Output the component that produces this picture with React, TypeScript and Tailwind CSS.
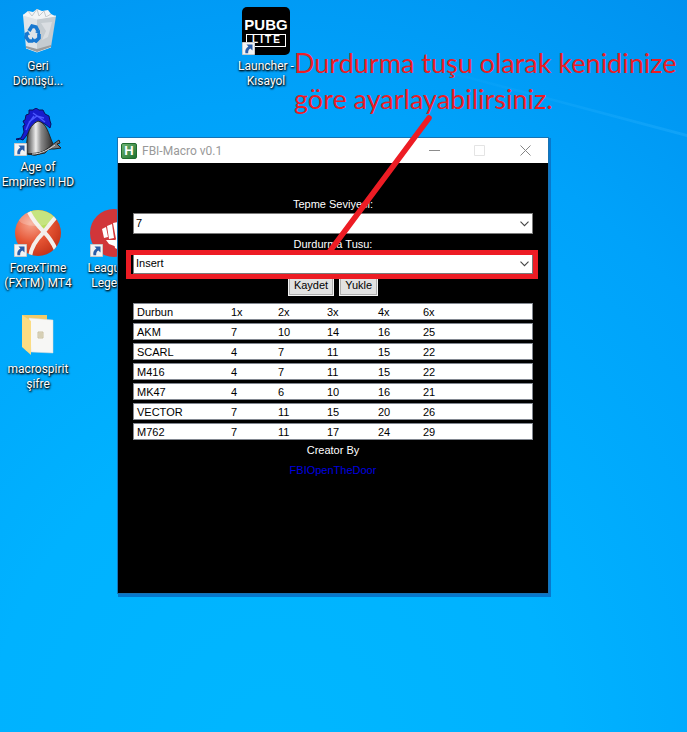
import type { ReactNode } from "react";

const scopes = ["Durbun", "1x", "2x", "3x", "4x", "6x"];

const weapons = [
  { name: "AKM", values: [7, 10, 14, 16, 25] },
  { name: "SCARL", values: [4, 7, 11, 15, 22] },
  { name: "M416", values: [4, 7, 11, 15, 22] },
  { name: "MK47", values: [4, 6, 10, 16, 21] },
  { name: "VECTOR", values: [7, 11, 15, 20, 26] },
  { name: "M762", values: [7, 11, 17, 24, 29] },
];

const rowClass =
  "grid h-[17px] grid-cols-[94px_47px_49px_51px_45px_1fr] border border-[#828790] bg-white pl-[3px] text-left leading-4 text-black";

export default function App() {
  return (
    <main className="relative min-h-screen overflow-hidden bg-[radial-gradient(ellipse_120%_130%_at_40%_105%,#00b7ff_0%,#00b2ff_35%,#00a2fa_70%,#008eed_100%)] font-['Roboto',sans-serif]">
      <LightRay />
      <div className="grid auto-rows-[101px] grid-cols-[repeat(auto-fill,76px)] pt-[7px]">
        <DesktopIcon place="col-start-1 row-start-1" lines={["Geri", "Dönüşü..."]}>
          <RecycleBin />
        </DesktopIcon>
        <DesktopIcon place="col-start-4 row-start-1" lines={["Launcher -", "Kısayol"]} shortcut>
          <PubgLogo />
        </DesktopIcon>
        <DesktopIcon place="col-start-1 row-start-2" lines={["Age of", "Empires II HD"]} shortcut>
          <Helmet />
        </DesktopIcon>
        <DesktopIcon place="col-start-1 row-start-3" lines={["ForexTime", "(FXTM) MT4"]} shortcut>
          <ForexLogo />
        </DesktopIcon>
        <DesktopIcon place="col-start-2 row-start-3" lines={["League of", "Legends"]} shortcut>
          <FistLogo />
        </DesktopIcon>
        <DesktopIcon place="col-start-1 row-start-4" lines={["macrospirit", "şifre"]}>
          <Folder />
        </DesktopIcon>
      </div>
      <MacroWindow />
      <p className="absolute top-[45px] left-[294px] font-['Lato',sans-serif] text-[27px] leading-9 whitespace-nowrap text-[#ed1c24]">
        Durdurma tuşu olarak kenidinize
        <br />
        göre ayarlayabilirsiniz.
      </p>
      <svg className="absolute top-[112px] left-[322px] h-[144px] w-[114px]" viewBox="0 0 114 144">
        <path d="M107 6 8 139" stroke="#ed1c24" strokeWidth="5.5" strokeLinecap="round" />
      </svg>
    </main>
  );
}

function MacroWindow() {
  return (
    <section className="absolute top-[138px] left-[118px] w-[430px] bg-black font-['Liberation_Sans',sans-serif] text-[11px] text-white shadow-[0_0_0_1px_#1673b4,3px_0_0_#0878cc,0_4px_0_#0878cc,3px_4px_0_#0878cc]">
      <header className="flex h-[25px] items-center bg-white pl-[3px] font-['Roboto',sans-serif] text-xs text-[#999]">
        <span className="mr-[5px] flex size-4 items-center justify-center rounded-[2px] border border-[#1f6b2c] bg-linear-to-br from-[#6fb573] to-[#1d7130] font-['Liberation_Sans',sans-serif] text-[13px] leading-none font-bold text-white">
          H
        </span>
        <h1 className="flex-1">FBI-Macro v0.1</h1>
        <button aria-label="Minimize" className="flex h-full w-[45px] items-center justify-center">
          <svg className="size-[11px]" viewBox="0 0 11 11"><path d="M0 5.5h11" stroke="#8c8c8c" /></svg>
        </button>
        <button aria-label="Maximize" disabled className="flex h-full w-[45px] items-center justify-center">
          <svg className="size-[11px]" viewBox="0 0 11 11"><path d="M.5.5h10v10H.5z" fill="none" stroke="#e4e4e4" /></svg>
        </button>
        <button aria-label="Close" className="flex h-full w-[46px] items-center justify-center">
          <svg className="size-[11px]" viewBox="0 0 11 11"><path d="m.5.5 10 10m0-10-10 10" stroke="#858585" /></svg>
        </button>
      </header>
      <div className="flex min-h-[430px] flex-col px-[15px] pt-8">
        <div className="flex flex-col gap-px">
          <Field id="recoil" label="Tepme Seviyesi:" value="7" />
          <Field id="stop-key" label="Durdurma Tusu:" value="Insert" marked />
        </div>
        <div className="flex justify-center gap-[5px]">
          <PushButton>Kaydet</PushButton>
          <PushButton>Yukle</PushButton>
        </div>
        <table className="mt-[7px] block">
          <thead className="block">
            <tr className={rowClass}>
              {scopes.map((scope) => (
                <th key={scope} scope="col" className="font-normal">{scope}</th>
              ))}
            </tr>
          </thead>
          <tbody className="mt-[3px] flex flex-col gap-[3px]">
            {weapons.map((weapon) => (
              <tr key={weapon.name} className={rowClass}>
                <th scope="row" className="font-normal">{weapon.name}</th>
                {weapon.values.map((value, i) => (
                  <td key={i}>{value}</td>
                ))}
              </tr>
            ))}
          </tbody>
        </table>
        <p className="text-center leading-5">Creator By</p>
        <a href="#creator" className="self-center leading-5 text-[#0000e0]">FBIOpenTheDoor</a>
      </div>
    </section>
  );
}

function Field({ id, label, value, marked }: { id: string; label: string; value: string; marked?: boolean }) {
  return (
    <div>
      <label htmlFor={id} className="block text-center leading-[18px]">{label}</label>
      <div className="relative">
        <select id={id} defaultValue={value} className="block h-[21px] w-full appearance-none border border-[#7a7a7a] bg-white pl-[2px] text-black">
          <option>{value}</option>
        </select>
        <svg className="pointer-events-none absolute top-2 right-1 h-[6px] w-[9px]" viewBox="0 0 9 6">
          <path d="m.5.7 4 4 4-4" fill="none" stroke="#444" strokeWidth="1.1" />
        </svg>
        {marked && <div className="pointer-events-none absolute -top-[3px] -right-[5px] -bottom-[5px] -left-[7px] z-10 border-5 border-[#ed1c24]" />}
      </div>
    </div>
  );
}

function PushButton({ children }: { children: ReactNode }) {
  return (
    <button className="h-[22px] border border-[#f4f4f4] bg-[#e1e1e1] px-[5px] leading-5 text-black inset-ring inset-ring-[#adadad]">
      {children}
    </button>
  );
}

function DesktopIcon({ place, lines, shortcut, children }: { place: string; lines: string[]; shortcut?: boolean; children: ReactNode }) {
  return (
    <div className={`flex flex-col items-center gap-1 ${place}`}>
      <div className="relative size-12">
        {children}
        {shortcut && <ShortcutArrow />}
      </div>
      <div className="text-center text-xs leading-[15px] whitespace-nowrap text-white [text-shadow:1px_1px_2px_#000,0_1px_2px_#000]">
        {lines.map((line) => (
          <div key={line}>{line}</div>
        ))}
      </div>
    </div>
  );
}

function ShortcutArrow() {
  return (
    <svg className="absolute bottom-0 left-0 size-[13px]" viewBox="0 0 13 13">
      <path d="M.5.5h12v12H.5z" fill="#f3f3f3" stroke="#c9c9c9" />
      <path d="M4.5 2.5h6v6L8.4 6.4C6.5 7.4 6 9 6.2 11.2H3.4C2.8 8 4 5.8 6.4 4.5z" fill="#2a5da8" />
    </svg>
  );
}

function LightRay() {
  return (
    <svg className="absolute inset-x-0 top-0 h-[150px] w-full" viewBox="0 0 687 150" preserveAspectRatio="none">
      <defs>
        <linearGradient id="ray">
          <stop offset=".35" stopColor="#37b8ff" stopOpacity="0" />
          <stop offset="1" stopColor="#37b8ff" stopOpacity=".3" />
        </linearGradient>
      </defs>
      <path d="M240 16 687 134v3L240 18z" fill="url(#ray)" />
    </svg>
  );
}

function RecycleBin() {
  return (
    <svg className="size-12" viewBox="0 0 48 48">
      <path d="M9 8 14 4l5 1 4-3 5 2 6-1 3 4 4 2-3 6H12z" fill="#f3f5f6" />
      <path d="m14 4 4 5 5-7 2 7 5-5 2 6 5-3" fill="none" stroke="#c3c9cd" />
      <path d="m9 8 14 4v33l-11-4z" fill="#dfe4e8" />
      <path d="m23 12 19-3-5 31-14 5z" fill="#c5ccd1" />
      <path d="m9 8 14 4 19-3M12 41l11 4 14-5" fill="none" stroke="#f3f5f6" />
      <path d="m12 39 11 3 14-4v2l-14 5-11-4z" fill="#9a9c9d" />
      <path d="m27 16 5 8-4 9 6-3 4-15M14 12l4 5-5 4" fill="#e2e6e9" opacity=".7" />
      <g fill="none" stroke="#1878d0" strokeWidth="3.6">
        <path d="m15 24 3-5 4 1 2 4" />
        <path d="m13 26-1 4 3 4 3 0" />
        <path d="m25 27 0 4-3 3-2-1" />
      </g>
      <path d="m21 25 5-2v5zM18 30v6l4-2zM10 27l4-3 2 4z" fill="#1878d0" />
    </svg>
  );
}

function PubgLogo() {
  return (
    <div className="flex size-12 flex-col items-center justify-center rounded-[5px] bg-black font-['Liberation_Sans_Narrow','Liberation_Sans',sans-serif] font-bold text-white">
      <span className="text-[15px] leading-[18px]">PUBG</span>
      <span className="flex h-[13px] w-[40px] items-center justify-around border border-white px-1 text-[10px] leading-none">
        <span>L</span>
        <span>I</span>
        <span>T</span>
        <span>E</span>
      </span>
    </div>
  );
}

function Helmet() {
  return (
    <svg className="size-12" viewBox="0 0 48 48">
      <defs>
        <linearGradient id="steel">
          <stop offset="0" stopColor="#3d3d3d" />
          <stop offset=".15" stopColor="#8a8a8a" />
          <stop offset=".35" stopColor="#eee" />
          <stop offset=".55" stopColor="#8a8a8a" />
          <stop offset="1" stopColor="#2a2a2a" />
        </linearGradient>
      </defs>
      <path d="m2 31 5-1 3-6-1-6 2-1-2-4 2-1 1-5 3-1 0-4 4 0 3-2 3 2 4 0 2 4 4 2 1 5 1 3-1 4-5-4-5-2-6 2-4 5-3 6-4 5-3-1-3 1z" fill="#171ccd" stroke="#09105d" />
      <path d="m12 22 3-7 5-7m-5 6 8-6 7 2m-11-5 7 5 5 4" fill="none" stroke="#4c58ff" strokeWidth="1.5" />
      <path d="M13 46c-1-14 0-28 11-33 9 2 10 12 15 23l-8 9-10 2z" fill="url(#steel)" stroke="#252525" />
      <path d="m14 46 9-1c9-1 14-8 22-13l1 3-3 1 4 4-7 1c-8-1-12 6-20 6z" fill="#777" stroke="#202020" />
      <path d="M18 46c9 0 16-4 23-9" fill="none" stroke="#ddd" />
    </svg>
  );
}

function ForexLogo() {
  return (
    <svg className="size-12" viewBox="0 0 48 48">
      <defs>
        <radialGradient id="fx-red" cx=".35" cy=".3" r=".8">
          <stop offset="0" stopColor="#f7a58e" />
          <stop offset=".5" stopColor="#e65534" />
          <stop offset="1" stopColor="#bd2c14" />
        </radialGradient>
        <clipPath id="fx-clip"><circle cx="24" cy="24" r="23" /></clipPath>
      </defs>
      <g clipPath="url(#fx-clip)">
        <path d="M0 0h48v48H0z" fill="url(#fx-red)" />
        <path d="M14 0h32L30 22z" fill="#b6dd5b" />
        <path d="M15 3c4 8 9 14 15 20 6 6 9 11 12 18M43 7c-5 5-9 11-14 17-7 7-12 14-13 24" fill="none" stroke="#f3efeb" strokeWidth="4" />
        <ellipse cx="22" cy="9" rx="18" ry="8" fill="#fff" opacity=".22" />
      </g>
    </svg>
  );
}

function FistLogo() {
  return (
    <svg className="size-12" viewBox="0 0 48 48">
      <circle cx="24" cy="24" r="24" fill="#d13639" />
      <path d="m12 20 4-2 2 10-4 1zM17 17l5-2 2 14-5 1zM23 14l5-1h7l5 5-2 17-9 6-4-2-1-6 2-3z" fill="#fff" />
      <path d="m16 31 9 0 2 7-8-3z" fill="#fff" />
    </svg>
  );
}

function Folder() {
  return (
    <svg className="size-12" viewBox="0 0 48 48">
      <path d="M8 5h25v36H12z" fill="#f1ca68" />
      <path d="m15 8 24 2v33l-22-1z" fill="#f7f7f5" stroke="#d9dad7" strokeWidth=".5" />
      <path d="m8 5 9 6v34l-9-8z" fill="#fbdc83" />
      <path d="M24 22h5v6h-5zM25 24h3m-3 2h3" fill="#e4dfc9" stroke="#c9c0a1" />
    </svg>
  );
}
